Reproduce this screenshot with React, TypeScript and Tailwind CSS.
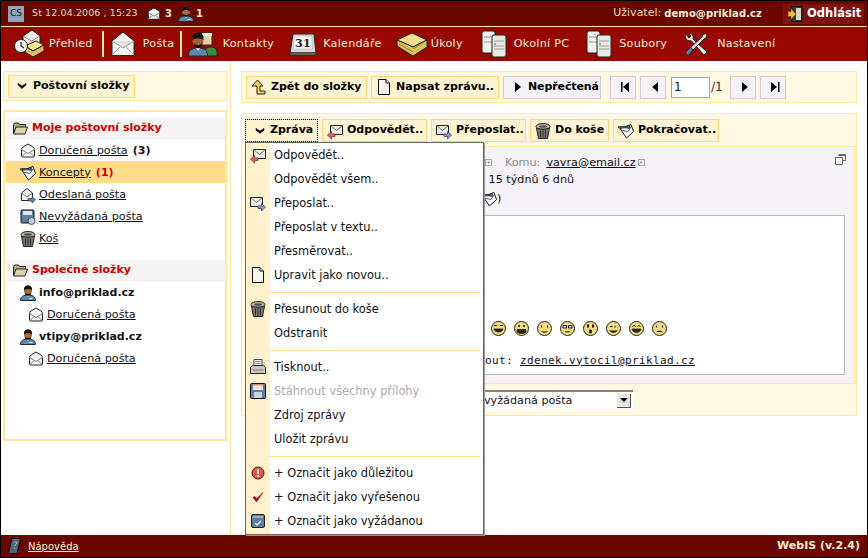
import type { ReactNode } from "react";

type IconProps = { className?: string };

const Envelope = ({ className = "w-4 h-4" }: IconProps) => (
  <svg viewBox="0 0 16 16" className={className}>
    <path d="M1.500 6.500Q1.500 5 3 4L8 1l5 3q1.500 1 1.500 2.500V13q0 1-1 1h-11q-1 0-1-1z" fill="#f4f4f0" stroke="#222" strokeWidth="1" />
    <path d="M1.500 6.500 8 10.500l6.500-4M1.500 14 6 9.500M14.500 14 10 9.500" fill="none" stroke="#777" strokeWidth="1" />
  </svg>
);

const BigEnvelope = ({ className = "w-6 h-7" }: IconProps) => (
  <svg viewBox="0 0 24 26" className={className}>
    <path d="M1 10 12 1l11 9v14.500H1z" fill="#f6f6f2" stroke="#222" strokeWidth="1" />
    <path d="M1 10l11 7 11-7" fill="#e4e4de" stroke="#999" strokeWidth="1" />
    <path d="M1 24 9.500 15.500M23 24l-8.500-8.500" fill="none" stroke="#aaa" strokeWidth="1" />
  </svg>
);

const Person = ({ className = "w-4 h-4" }: IconProps) => (
  <svg viewBox="0 0 16 16" className={className}>
    <path d="M.5 15.500c0-4 3-5.500 7.500-5.500s7.500 1.500 7.500 5.500z" fill="#5f86ad" stroke="#1c2b3a" strokeWidth="1" />
    <path d="M6.500 10 8 12l1.500-2zM9.500 13h3v1h-3z" fill="#fff" />
    <ellipse cx="8" cy="5.500" rx="4" ry="5" fill="#b06a30" />
    <path d="M4 5.500C3.500 1.500 6 .5 8 .5s4.500 1 4 5C10.500 3.500 5.500 3.500 4 5.500zM5.500 7.500c1 2 4 2 5 0l.5 2L8 11 5 9.500z" fill="#111" />
  </svg>
);

const Overview = ({ className = "w-[30px] h-[30px]" }: IconProps) => (
  <svg viewBox="0 0 30 30" className={className}>
    <path d="M9 7 18 1l8 6v9H9z" fill="#ecebe6" stroke="#222" />
    <path d="M9 7l8.500 5L26 7" fill="none" stroke="#888" />
    <path d="M11 17l11-5 8 4-11 6z" fill="#f5e28f" stroke="#222" />
    <path d="M11 17v6l8 5 11-6v-6l-11 6z" fill="#d8bd62" stroke="#222" />
    <circle cx="7" cy="17" r="6.500" fill="#f2f2ee" stroke="#222" />
    <path d="M7 13v4l3 2" fill="none" stroke="#222" strokeWidth="1.200" />
  </svg>
);

const Contacts = ({ className = "w-[30px] h-[26px]" }: IconProps) => (
  <svg viewBox="0 0 30 26" className={className}>
    <path d="M14 2h10v12H14z" fill="#e2d3a8" stroke="#333" />
    <path d="M14 2h10v3H14z" fill="#f4f0e0" />
    <path d="M16 25c0-6 2-9 6-9 4 0 7 1.500 7 5v4z" fill="#3d8a3a" stroke="#123" />
    <path d="M.5 25c0-6 3-8 9.500-8s9.500 2 9.500 8z" fill="#5f86ad" stroke="#1c2b3a" />
    <path d="M8 17l2 3 2-3z" fill="#fff" />
    <ellipse cx="10" cy="9.500" rx="5.500" ry="7" fill="#a8622c" />
    <path d="M4.500 9C4 2.500 7.500 1.500 10 1.500s6 1 5.500 7.500c-1.500-2-9.500-2-11 0zM6.500 12c1.500 3 5.500 3 7 0l.5 3-4 2.500L6 15z" fill="#111" />
  </svg>
);

const CalendarBig = ({ className = "w-[28px] h-[24px]" }: IconProps) => (
  <svg viewBox="0 0 28 24" className={className}>
    <path d="M1 21 4 2h21l2 19z" fill="#d8d8d2" stroke="#222" />
    <path d="M1 21h26v2H1z" fill="#999" stroke="#222" />
    <path d="M5.500 4h17l1 13H4z" fill="#f7f7f3" stroke="#aaa" strokeWidth=".5" />
    <text x="14" y="15" textAnchor="middle" fontSize="11" fontWeight="700" fontFamily="'DejaVu Serif', serif" fill="#222">31</text>
  </svg>
);

const Book = ({ className = "w-[31px] h-[25px]" }: IconProps) => (
  <svg viewBox="0 0 31 25" className={className}>
    <path d="M1 8 16 1l15 7-14 7z" fill="#f4df8a" stroke="#222" />
    <path d="M1 8v6l16 10 14-9V8L17 15z" fill="#dcc25f" stroke="#222" />
    <path d="M3 12l14 8M28 10l-11 7" stroke="#8c7a30" fill="none" />
  </svg>
);

const Servers = ({ className = "w-[26px] h-[28px]" }: IconProps) => (
  <svg viewBox="0 0 26 28" className={className}>
    <rect x="1" y="1" width="13" height="22" rx="2" fill="#f1f1ec" stroke="#222" />
    <path d="M3 7h9M3 12h9" stroke="#999" />
    <rect x="11" y="5" width="14" height="22" rx="2" fill="#e9e9e4" stroke="#222" />
    <path d="M13 11h10M13 16h10M13 19h10" stroke="#999" />
    <circle cx="14" cy="14" r="1" fill="#6a8" />
  </svg>
);

const Tools = ({ className = "w-[24px] h-[24px]" }: IconProps) => (
  <svg viewBox="0 0 24 24" className={className}>
    <path d="M3 2C1 4 1 6 3 8c1.500 1 3 1 4 .5L20 23l3-3L9 7c.5-2 0-3-1-4.500C7 1 5.500 1 5 1l2 3-2.500 2z" fill="#eee" stroke="#222" />
    <path d="M22 1.500l-3 1-1 2.500L5 17l2.500 2.500L20 7l2-1 1-3z" fill="#ddd" stroke="#222" />
    <path d="M2 19.500 7 15.500l2 2.500L4.500 23c-2 .5-3-1.500-2.500-3.500z" fill="#5d82ad" stroke="#1c2b3a" />
  </svg>
);

const Logout = ({ className = "w-4 h-4" }: IconProps) => (
  <svg viewBox="0 0 16 16" className={className}>
    <rect x="5" y="0.500" width="10" height="15" fill="#26402c" stroke="#111" />
    <path d="M9 2h5v12H9z" fill="#d8d8c8" />
    <path d="M1 5.500h3V2.500l5 5.500-5 5.500v-3H1z" fill="#f0b840" stroke="#6b4a00" strokeWidth=".7" />
  </svg>
);

const Reply = ({ className = "w-4 h-4" }: IconProps) => (
  <svg viewBox="0 0 16 16" className={className}>
    <path d="M3.500 2.500h12v9h-12z" fill="#ecebe6" stroke="#222" />
    <path d="M3.500 2.500l6 5 6-5" fill="none" stroke="#777" />
    <path d="M.5 12 4.500 8.500V11H8v2.500H4.500V16z" fill="#d96a6a" stroke="#7a1f1f" strokeWidth=".7" />
  </svg>
);

const Forward = ({ className = "w-4 h-4" }: IconProps) => (
  <svg viewBox="0 0 16 16" className={className}>
    <path d="M.5 2.500h12v9H.5z" fill="#ecebe6" stroke="#222" />
    <path d="M.5 2.500l6 5 6-5" fill="none" stroke="#777" />
    <path d="M15.500 12 11.500 8.500V11H8v2.500h3.500V16z" fill="#8f93d6" stroke="#30336b" strokeWidth=".7" />
  </svg>
);

const Trash = ({ className = "w-4 h-4" }: IconProps) => (
  <svg viewBox="0 0 16 16" className={className}>
    <ellipse cx="8" cy="3.500" rx="7" ry="3" fill="#b5b5ae" stroke="#222" />
    <ellipse cx="8" cy="3.500" rx="4" ry="1.300" fill="#55554f" />
    <path d="M1.500 5 3.500 15.500h9L14.500 5c-1.500 1.500-11.500 1.500-13 0z" fill="#77776f" stroke="#222" />
    <path d="M5.500 7.500v7M8 7.500v7M10.500 7.500v7" stroke="#2c2c28" />
  </svg>
);

const Draft = ({ className = "w-4 h-4" }: IconProps) => (
  <svg viewBox="0 0 16 16" className={className}>
    <path d="M2 5.500 13 1.500l2.500 7-7 6.500z" fill="#fff" stroke="#111" />
    <path d="M3 7l7 1.500 3-4.500" fill="none" stroke="#555" />
    <path d="M.5 3.500h8l3-1v3l-3-.5h-8z" fill="#3d6fa8" stroke="#111" strokeWidth=".6" />
  </svg>
);

const Page = ({ className = "w-4 h-4" }: IconProps) => (
  <svg viewBox="0 0 16 16" className={className}>
    <path d="M2.500.5h7.500l3.500 3.500v11.500h-11z" fill="#f6f6ee" stroke="#111" />
    <path d="M10 .5v3.500h3.500" fill="#ddd" stroke="#111" />
  </svg>
);

const UpArrow = ({ className = "w-4 h-4" }: IconProps) => (
  <svg viewBox="0 0 16 16" className={className}>
    <path d="M1 7 6.500 1 12 7H9v5h5v3H6V7z" fill="#f6cf55" stroke="#222" />
  </svg>
);

const Sent = ({ className = "w-4 h-4" }: IconProps) => (
  <svg viewBox="0 0 16 16" className={className}>
    <path d="M1.500 6 7 1.500 12.500 6v7.500h-11z" fill="#f4f4f0" stroke="#222" />
    <path d="M1.500 6 7 10l5.500-4" fill="none" stroke="#777" />
    <path d="M15.500 12.500 12 9.500v2H8V14h4v2z" fill="#5d82ad" stroke="#1c2b3a" strokeWidth=".6" />
  </svg>
);

const Spam = ({ className = "w-4 h-4" }: IconProps) => (
  <svg viewBox="0 0 16 16" className={className}>
    <rect x="1" y="1" width="13" height="13" rx="1" fill="#5d7ea6" stroke="#111" />
    <rect x="3" y="2" width="9" height="4" fill="#dce6f0" />
    <circle cx="11.500" cy="12" r="3.500" fill="#bcd2e6" stroke="#556" />
  </svg>
);

const FolderOpen = ({ className = "w-[15px] h-[13px]" }: IconProps) => (
  <svg viewBox="0 0 15 13" className={className}>
    <path d="M.5 11.500V2.500l1-1.500h4l1 1.500h6v2" fill="#b0ad7c" stroke="#222" />
    <path d="M.5 12 3 5h11.500L12 12z" fill="#d8d6a8" stroke="#222" />
  </svg>
);

const Printer = ({ className = "w-4 h-4" }: IconProps) => (
  <svg viewBox="0 0 16 16" className={className}>
    <path d="M4 .5h8v7H4z" fill="#fafafa" stroke="#444" />
    <path d="M5.500 2.500h5M5.500 4.500h5" stroke="#888" />
    <path d="M.5 8.500l2-2h11l2 2v6h-15z" fill="#c9c9c2" stroke="#222" />
    <path d="M2.500 11h11" stroke="#777" />
  </svg>
);

const Floppy = ({ className = "w-4 h-4" }: IconProps) => (
  <svg viewBox="0 0 16 16" className={className}>
    <rect x=".5" y=".5" width="15" height="15" rx="1" fill="#5d7ea6" stroke="#111" />
    <rect x="3" y="1" width="10" height="6" fill="#f0e6e0" />
    <path d="M3 1h10v1.500H3z" fill="#d98a70" />
    <rect x="4" y="9" width="8" height="6" fill="#c9d4de" />
  </svg>
);

const Alert = ({ className = "w-3.5 h-3.5" }: IconProps) => (
  <svg viewBox="0 0 14 14" className={className}>
    <circle cx="7" cy="7" r="6" fill="#e2553a" stroke="#5a1a10" />
    <path d="M6 3h2v5H6zM6 9.300h2v1.700H6z" fill="#fff" />
  </svg>
);

const Check = ({ className = "w-3 h-3" }: IconProps) => (
  <svg viewBox="0 0 12 12" className={className}>
    <path d="M1 6.500 4.500 11 11 1.500 4.800 7.500 3 5.500z" fill="#a0101a" stroke="#a0101a" strokeWidth=".6" />
  </svg>
);

const CalCheck = ({ className = "w-3.5 h-3.5" }: IconProps) => (
  <svg viewBox="0 0 14 14" className={className}>
    <rect x=".5" y=".5" width="13" height="13" rx="1.500" fill="#5d7ea6" stroke="#222" />
    <rect x="2" y="2" width="10" height="2" fill="#aab" />
    <path d="M4 9l2 2 4-4" fill="none" stroke="#fff" strokeWidth="1.200" />
  </svg>
);

const Help = ({ className = "w-[13px] h-[16px]" }: IconProps) => (
  <svg viewBox="0 0 13 16" className={className}>
    <path d="M4 .5h8.500L9 15.500H.5z" fill="#4a6484" stroke="#111" />
    <path d="M6.200 4.500c1-1.500 3.300-1 2.800.5S7 6.500 6.800 8M6.500 9.500v1" fill="none" stroke="#f0d060" />
  </svg>
);

const Chevron = () => (
  <svg viewBox="0 0 10 6" className="w-2.5 h-1.5 shrink-0">
    <path d="M1 .5 5 3l4-2.500V2L5 5.500 1 2z" fill="#000" stroke="#000" strokeWidth=".6" />
  </svg>
);

const Tri = ({ d }: { d: string }) => (
  <svg viewBox="0 0 10 12" className="w-2.5 h-3">
    <path d={d} fill="#000" />
  </svg>
);

const Plus = () => (
  <span className="inline-flex w-[5px] h-[5px] box-content border border-[#aaa] text-[5px] leading-[5px] text-[#666] items-center justify-center align-middle">
    +
  </span>
);

const Smiley = ({ mouth, eyes }: { mouth: string; eyes?: ReactNode }) => (
  <svg viewBox="0 0 15 15" className="w-[15px] h-[15px]">
    <circle cx="7.500" cy="7.500" r="7" fill="#f0dc7e" stroke="#222" />
    {eyes ?? <path d="M4.500 4.500v2M10.500 4.500v2" stroke="#111" strokeWidth="1.200" />}
    <path d={mouth} fill="#222" stroke="#222" strokeWidth=".8" />
  </svg>
);

const smileys = [
  { mouth: "M3 8h9c-.5 4-8.500 4-9 0z", eyes: <path d="M3 4.500h3M9 4.500h3" stroke="#111" /> },
  { mouth: "M3 8.500h9v2.500c-2 2-7 2-9 0z", eyes: <path d="M4 5h2M9 5h2" stroke="#111" strokeWidth="1.400" /> },
  { mouth: "M4.500 10.500c1.500 1 4.500 1 6 0" },
  { mouth: "M5 10.500c1 .8 4 .8 5 0", eyes: <path d="M3 4.500h3.500v2.500H3zM8.500 4.500H12v2.500H8.500z" fill="#fff" stroke="#111" /> },
  { mouth: "M6.500 9h2v3h-2z", eyes: <path d="M5 3.500v3M10 3.500v3" stroke="#111" strokeWidth="2" /> },
  { mouth: "M3.500 9.500c2 2.500 6 2.500 8 0", eyes: <path d="M4 5.500h2.500M9 5v1.500" stroke="#111" /> },
  { mouth: "M3 8h9c-.5 4.500-8.500 4.500-9 0z", eyes: <path d="M3.500 5.500l1.500-1 1.500 1M8.500 5.500l1.500-1 1.500 1" fill="none" stroke="#111" /> },
  { mouth: "M4.500 11c1.500-1.200 4.500-1.200 6 0" },
];

function Btn({
  icon,
  label,
  width,
  plain,
  className = "",
}: {
  icon?: ReactNode;
  label?: string;
  width: string;
  plain?: boolean;
  className?: string;
}) {
  return (
    <div
      className={`${width} h-[23px] shrink-0 flex items-center gap-1 pl-[4px] border font-bold text-[11px] text-black whitespace-nowrap [&>svg]:shrink-0 ${
        plain ? "bg-[#f5f2f8] border-[#cccccc]" : "bg-[#fff4d2] border-[#ffd677]"
      } ${className}`}
    >
      {icon}
      {label}
    </div>
  );
}

function NavItem({ icon, label, className = "" }: { icon: ReactNode; label: string; className?: string }) {
  return (
    <div className={`flex items-center shrink-0 ${className}`}>
      {icon}
      <span>{label}</span>
    </div>
  );
}

function FolderRow({
  icon,
  label,
  extra,
  active,
  indent = "pl-[14px]",
}: {
  icon: ReactNode;
  label: string;
  extra?: ReactNode;
  active?: boolean;
  indent?: string;
}) {
  return (
    <div className={`h-[22px] flex items-center gap-[3px] pt-[2px] ${indent} ${active ? "bg-[#ffdd88]" : ""}`}>
      <span className="w-[16px] flex justify-center shrink-0">{icon}</span>
      <span className="underline">{label}</span>
      {extra}
    </div>
  );
}

const SectionHeader = ({ label }: { label: string }) => (
  <div className="h-[21px] flex items-center gap-[4px] pl-[7px] pt-[1px] bg-[#f6f5f3] border-b border-[#eeeeee] font-bold text-[11px] text-[#cc0000]">
    <FolderOpen />
    {label}
  </div>
);

type MenuEntry = { icon?: ReactNode; label: string; disabled?: boolean } | "sep";

const menu: MenuEntry[] = [
  { icon: <Reply />, label: "Odpovědět.." },
  { label: "Odpovědět všem.." },
  { icon: <Forward />, label: "Přeposlat.." },
  { label: "Přeposlat v textu.." },
  { label: "Přesměrovat.." },
  { icon: <Page />, label: "Upravit jako novou.." },
  "sep",
  { icon: <Trash />, label: "Přesunout do koše" },
  { label: "Odstranit" },
  "sep",
  { icon: <Printer />, label: "Tisknout.." },
  { icon: <Floppy />, label: "Stáhnout všechny přílohy", disabled: true },
  { label: "Zdroj zprávy" },
  { label: "Uložit zprávu" },
  "sep",
  { icon: <Alert />, label: "+ Označit jako důležitou" },
  { icon: <Check />, label: "+ Označit jako vyřešenou" },
  { icon: <CalCheck />, label: "+ Označit jako vyžádanou" },
];

export default function App() {
  return (
    <div className="relative w-[868px] h-[558px] overflow-hidden flex flex-col border border-black bg-white text-[11.2px] text-[#111] font-['DejaVu_Sans',sans-serif]">
      {/* top bar */}
      <div className="h-[25px] shrink-0 flex items-center pl-[7px] pr-[3px] bg-[#6a0800] border-b border-[#ffe9a0] box-content text-[#e8d4b0]">
        <div className="w-[16px] h-[16px] flex items-center justify-center bg-[#8ea5bb] text-[#111] text-[9px]">CS</div>
        <span className="ml-[8px] w-[110px] text-[9.500px] tracking-[0.1px] whitespace-pre">St 12.04.2006 , 15:23</span>
        <Envelope className="w-[14px] h-[14px] ml-[5px]" />
        <b className="ml-[4px] text-[#f4e8c8] text-[10px]">3</b>
        <Person className="w-[16px] h-[16px] ml-[6px]" />
        <b className="ml-[2px] text-[#f4e8c8] text-[10px]">1</b>
        <span className="ml-auto text-[11px]">Uživatel:</span>
        <b className="ml-[3px] text-[10px] tracking-[0.1px] text-[#f6ecd2]">demo@priklad.cz</b>
        <div className="ml-[21px] w-[81px] h-[20px] flex items-center gap-[4px] pl-[4px] bg-[#7c1212] font-bold text-white text-[11.500px]">
          <Logout />
          Odhlásit
        </div>
      </div>

      {/* main nav */}
      <div className="h-[34px] shrink-0 flex items-center bg-[#990800] text-[#f6ecd2] pl-[13px] tracking-[0.25px]">
        <NavItem icon={<Overview />} label="Přehled" className="gap-[5px]" />
        <NavItem
          icon={<BigEnvelope />}
          label="Pošta"
          className="ml-[9px] w-[80px] h-[26px] pl-[7px] gap-[8px] border-x-2 border-[#ffe9a0]"
        />
        <NavItem icon={<Contacts />} label="Kontakty" className="ml-[6px] gap-[5px]" />
        <NavItem icon={<CalendarBig />} label="Kalendáře" className="ml-[15px] gap-[6px]" />
        <NavItem icon={<Book />} label="Úkoly" className="ml-[14px] gap-[4px]" />
        <NavItem icon={<Servers />} label="Okolní PC" className="ml-[18px] gap-[7px]" />
        <NavItem icon={<Servers />} label="Soubory" className="ml-[17px] gap-[7px]" />
        <NavItem icon={<Tools />} label="Nastavení" className="ml-[17px] gap-[9px]" />
      </div>

      <div className="flex-1 flex min-h-0">
        {/* sidebar */}
        <div className="w-[230px] shrink-0 pl-[2px] pr-[3px] pt-[10px] border-r border-[#ffe9a0]">
          <div className="h-[30px] flex items-center pl-[4px] bg-[#fff9e3] border border-[#ffe9a0] w-[224px]">
            <Btn icon={<Chevron />} label="Poštovní složky" width="w-[127px]" className="gap-[6px] pl-[8px]" />
          </div>
          <div className="mt-[9px] h-[331px] w-[224px] border-2 border-[#ffe9a0] pt-[6px] pl-px">
            <SectionHeader label="Moje poštovní složky" />
            <FolderRow icon={<Envelope />} label="Doručená pošta" extra={<b className="ml-[2px] text-[11px]">(3)</b>} />
            <FolderRow
              icon={<Draft />}
              label="Koncepty"
              active
              extra={<b className="ml-[2px] text-[11px] text-[#cc0000]">(1)</b>}
            />
            <FolderRow icon={<Sent />} label="Odeslaná pošta" />
            <FolderRow icon={<Spam />} label="Nevyžádaná pošta" />
            <FolderRow icon={<Trash />} label="Koš" />
            <div className="h-[11px]" />
            <SectionHeader label="Společné složky" />
            <div className="h-[22px] flex items-center gap-[3px] pl-[14px] pt-[2px] font-bold text-[11px]">
              <Person className="w-4 h-4" />
              info@priklad.cz
            </div>
            <FolderRow icon={<Envelope />} label="Doručená pošta" indent="pl-[22px]" />
            <div className="h-[22px] flex items-center gap-[3px] pl-[14px] pt-[2px] font-bold text-[11px]">
              <Person className="w-4 h-4" />
              vtipy@priklad.cz
            </div>
            <FolderRow icon={<Envelope />} label="Doručená pošta" indent="pl-[22px]" />
          </div>
        </div>

        {/* content */}
        <div className="flex-1 min-w-0 pl-[10px] pt-[10px]">
          <div className="w-[616px] h-[32px] flex items-center gap-[4px] pl-[4px] bg-[#fff9e3] border border-[#ffe9a0]">
            <Btn icon={<UpArrow />} label="Zpět do složky" width="w-[121px]" />
            <Btn icon={<Page />} label="Napsat zprávu.." width="w-[128px]" />
            <Btn icon={<Tri d="M2 1l6 5-6 5z" />} label="Nepřečtená" width="w-[98px]" plain className="pl-[9px] gap-[5px] tracking-[-0.1px]" />
            <Btn icon={<Tri d="M1 1h1.500v10H1zM9 1v10L3 6z" />} width="w-[26px] ml-[5px]" plain className="justify-center pl-0" />
            <Btn icon={<Tri d="M8 1v10L2 6z" />} width="w-[26px]" plain className="justify-center pl-0" />
            <div className="w-[39px] h-[21px] ml-[1px] bg-white border border-[#9aa7b4] pl-[2px] text-[12px] leading-[19px]">1</div>
            <span className="text-[12px] -ml-[3px] text-[#333]">/1</span>
            <Btn icon={<Tri d="M2 1l6 5-6 5z" />} width="w-[26px] ml-[3px]" plain className="justify-center pl-0" />
            <Btn icon={<Tri d="M1 1l6 5-6 5zM8 1h1.500v10H8z" />} width="w-[26px]" plain className="justify-center pl-0" />
          </div>

          <div className="mt-[10px] w-[616px] h-[303px] flex flex-col bg-[#fff9e3] border border-[#ffe9a0] pl-[3px] pr-[1px]">
            <div className="h-[32px] shrink-0 flex items-center gap-[4px] pt-[1px]">
              <Btn
                icon={<Chevron />}
                label="Zpráva"
                width="w-[73px]"
                className="pl-[9px] gap-[5px] outline-1 outline-dotted outline-black -outline-offset-1"
              />
              <Btn icon={<Reply />} label="Odpovědět.." width="w-[105px]" />
              <Btn icon={<Forward />} label="Přeposlat.." width="w-[95px]" />
              <Btn icon={<Trash />} label="Do koše" width="w-[79px]" />
              <Btn icon={<Draft />} label="Pokračovat.." width="w-[106px]" />
            </div>

            <div className="relative h-[238px] shrink-0 bg-[#f5f2f8] border border-[#ffe9a0] pr-[9px]">
              <div className="h-[25px] pt-[7px] flex items-center">
                <span className="w-[237px] text-right overflow-hidden whitespace-nowrap">zdenek.vytocil@priklad.cz</span>
                <span className="ml-[2px]"><Plus /></span>
                <span className="ml-[13px] text-[#8a8a8a]">Komu:</span>
                <span className="ml-[6px] underline">vavra@email.cz</span>
                <span className="ml-[2px]"><Plus /></span>
              </div>
              <div className="h-[17px] flex items-center">
                <span className="w-[239px] text-right whitespace-nowrap overflow-hidden">Stáří: 1 rok</span>
                <span className="whitespace-pre"> 15 týdnů 6 dnů</span>
              </div>
              <div className="h-[20px] flex items-center">
                <span className="w-[235px] text-right whitespace-nowrap overflow-hidden">Složka: Koncepty (</span>
                <Draft />
                <span>)</span>
              </div>
              <svg viewBox="0 0 11 11" className="absolute right-[8px] top-[7px] w-[11px] h-[11px]">
                <path d="M3.500.5h7v6h-3M.5 3.500h7v7h-7z" fill="none" stroke="#666" />
                <path d="M.5 3.500h7M3.500 1.500h7" stroke="#666" />
              </svg>

              <div className="mt-[6px] h-[160px] flex flex-col justify-end bg-white border border-[#bbbbbb] pl-[231px] pb-[5px]">
                <div className="flex gap-[8px] ml-[13px] mb-[17px]">
                  {smileys.map((s, i) => (
                    <Smiley key={i} mouth={s.mouth} eyes={s.eyes} />
                  ))}
                </div>
                <div className="font-['DejaVu_Sans_Mono',monospace] text-[11px] tracking-[0.38px]">
                  hout: <span className="underline">zdenek.vytocil@priklad.cz</span>
                </div>
              </div>
            </div>

            <div className="flex-1 flex items-center">
              <div className="ml-[106px] w-[282px] h-[20px] flex items-center justify-between pl-[133px] bg-white border-t-2 border-[#808080] pr-[2px]">
                <span className="pt-[1px]">vyžádaná pošta</span>
                <div className="w-[14px] h-[14px] flex items-center justify-center bg-[#e8e6e0] border-r border-b border-[#555]">
                  <svg viewBox="0 0 8 4" className="w-2 h-1"><path d="M0 0h8L4 4z" fill="#000" /></svg>
                </div>
              </div>
            </div>
          </div>
        </div>
      </div>

      {/* footer */}
      <div className="h-[22px] shrink-0 flex items-center pl-[7px] pr-[7px] bg-[#6a0800] text-[#f6ecd2]">
        <Help />
        <span className="ml-[7px] text-[10px] underline">Nápověda</span>
        <b className="ml-auto text-[11px]">WebIS (v.2.4)</b>
      </div>

      {/* dropdown menu */}
      <div className="absolute left-[244px] top-[141px] w-[239px] h-[393px] bg-white border border-[#666666] shadow-[1px_1px_0_#999] text-[11.400px]">
        <div className="absolute inset-y-0 left-0 w-[24px] bg-[#fff1cc]" />
        <div className="relative">
          {menu.map((item, i) =>
            item === "sep" ? (
              <div key={i} className="h-[10px] flex items-center pl-[24px] pr-[3px]">
                <div className="w-full h-px bg-[#ffe08a]" />
              </div>
            ) : (
              <div key={i} className={`h-[24px] flex items-center ${item.disabled ? "text-[#aaaaaa]" : ""}`}>
                <span className="w-[24px] flex justify-center shrink-0">{item.icon}</span>
                <span className="ml-[4px] pt-[2px]">{item.label}</span>
              </div>
            )
          )}
        </div>
      </div>
    </div>
  );
}
